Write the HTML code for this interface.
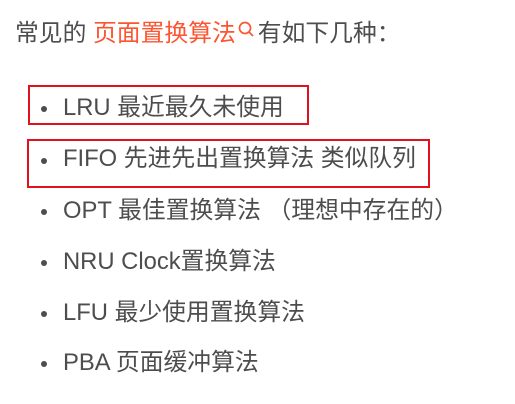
<!DOCTYPE html>
<html><head><meta charset="utf-8"><style>
body{margin:0;width:515px;height:404px;background:#fff;position:relative;overflow:hidden;font-family:"Liberation Sans","Noto Sans CJK SC",sans-serif;color:#4d4d4d;font-size:23.8px}
.t{position:absolute;white-space:nowrap;line-height:28px}
.dot{position:absolute;width:6px;height:6px;border-radius:50%;background:#4d4d4d}
.box{position:absolute;border:2px solid #e0121e}
.r{color:#fc5531}
</style></head><body>
<div class="t" style="left:15px;top:20px">常见的 <span class="r">页面置换算法</span><svg width="22" height="22" viewBox="0 0 22 22" style="vertical-align:top;margin-top:0px"><circle cx="9" cy="8" r="5.5" fill="none" stroke="#fc5531" stroke-width="1.7"/><line x1="13" y1="12" x2="17" y2="16" stroke="#fc5531" stroke-width="1.7"/></svg>有如下几种：</div>
<div class="box" style="left:28px;top:85px;width:277px;height:36px"></div>
<div class="box" style="left:27px;top:139px;width:399px;height:45px"></div>
<div class="dot" style="left:41px;top:106px"></div><div class="t" style="left:63px;top:94px">LRU 最近最久未使用</div>
<div class="dot" style="left:41px;top:158px"></div><div class="t" style="left:63px;top:145px">FIFO 先进先出置换算法 类似队列</div>
<div class="dot" style="left:41px;top:209px"></div><div class="t" style="left:63px;top:197px">OPT 最佳置换算法 （理想中存在的）</div>
<div class="dot" style="left:41px;top:260px"></div><div class="t" style="left:63px;top:248px">NRU Clock置换算法</div>
<div class="dot" style="left:41px;top:311px"></div><div class="t" style="left:63px;top:299px">LFU 最少使用置换算法</div>
<div class="dot" style="left:41px;top:361px"></div><div class="t" style="left:63px;top:349px">PBA 页面缓冲算法</div>
</body></html>
